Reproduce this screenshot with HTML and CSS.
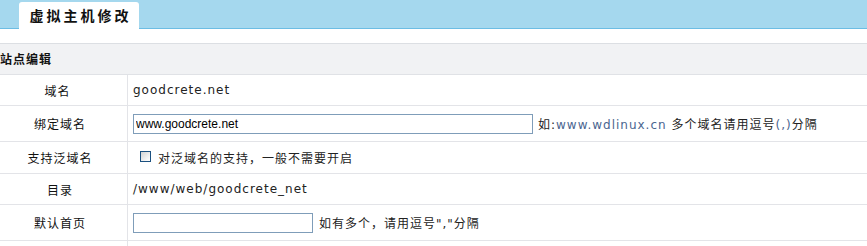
FILE: index.html
```html
<!DOCTYPE html>
<html lang="zh-CN">
<head>
  <meta charset="UTF-8" />
  <title>虚拟主机修改</title>
  <link rel="stylesheet" href="styles.css">
</head>
<body>
  <div class="tabbar">
    <div class="tab">虚拟主机修改</div>
  </div>
  <div class="form">
    <div class="section">站点编辑</div>
    <div class="row">
      <div class="label">域名&nbsp;</div>
      <div class="value">goodcrete.net</div>
    </div>
    <div class="row tall">
      <div class="label">绑定域名</div>
      <div class="value">
        <input class="text wide" type="text" value="www.goodcrete.net">
        <span>如:<span class="hint">www.wdlinux.cn</span> 多个域名请用逗号<span class="hint">(,)</span>分隔</span>
      </div>
    </div>
    <div class="row">
      <div class="label">支持泛域名</div>
      <div class="value">
        <span class="check"></span>
        <span>对泛域名的支持，一般不需要开启</span>
      </div>
    </div>
    <div class="row">
      <div class="label">目录</div>
      <div class="value">/www/web/goodcrete_net</div>
    </div>
    <div class="row tall">
      <div class="label">默认首页</div>
      <div class="value">
        <input class="text short" type="text" value="">
        <span>如有多个，请用逗号","分隔</span>
      </div>
    </div>
    <div class="row">
      <div class="label"></div>
      <div class="value"></div>
    </div>
  </div>
</body>
</html>
```

FILE: styles.css
```css
body {
  margin: 0;
  background: #fff;
  font-family: "DejaVu Sans", "Noto Sans CJK SC", sans-serif;
  font-size: 12px;
  letter-spacing: 1px;
  color: #222;
}
.tabbar {
  height: 28px;
  background: #a5d8ee;
  border-bottom: 1px solid #6cbde4;
  display: flex;
  align-items: flex-end;
  padding-left: 19px;
}
.tab {
  height: 27px;
  margin-bottom: -1px;
  width: 120px;
  background: #fff;
  border-radius: 3px 3px 0 0;
  font-family: "Noto Sans CJK SC", sans-serif;
  font-weight: 700;
  font-size: 14px;
  letter-spacing: 3px;
  line-height: 27px;
  color: #111;
  text-align: center;
  text-indent: 3px;
}
.form {
  margin-top: 14px;
}
.section {
  height: 30px;
  line-height: 30px;
  background: #f1f2f4;
  border-top: 1px solid #dcdfe3;
  border-bottom: 1px solid #e0e2e6;
  font-family: "Noto Sans CJK SC", sans-serif;
  font-weight: 700;
  font-size: 12px;
  letter-spacing: 1px;
  color: #111;
}
.row {
  display: grid;
  grid-template-columns: 128px 1fr;
  height: 30px;
  border-bottom: 1px solid #e3e4e8;
}
.row.tall {
  height: 35px;
}
.row:nth-child(4) {
  height: 31px;
}
.label {
  border-right: 1px solid #e3e4e8;
  padding-right: 7px;
  display: flex;
  align-items: center;
  justify-content: center;
  color: #111;
}
.value {
  display: flex;
  align-items: center;
  gap: 5px;
  padding-left: 5px;
  color: #222;
}
.hint {
  color: #4a6590;
}
.text {
  box-sizing: border-box;
  height: 20px;
  border: 1px solid #7f9db9;
  padding: 0 2px;
  font-family: "Liberation Sans", Arial, sans-serif;
  font-size: 12px;
  letter-spacing: 0;
  color: #000;
  outline: none;
}
.wide {
  width: 400px;
}
.short {
  width: 180px;
  margin-right: 1px;
}
.check {
  box-sizing: border-box;
  width: 11px;
  height: 11px;
  margin: -2px 2px 0 7px;
  border: 1px solid #1c5180;
  background: linear-gradient(135deg, #d2d2d2, #f4f4f4 70%, #fff);
}
```
